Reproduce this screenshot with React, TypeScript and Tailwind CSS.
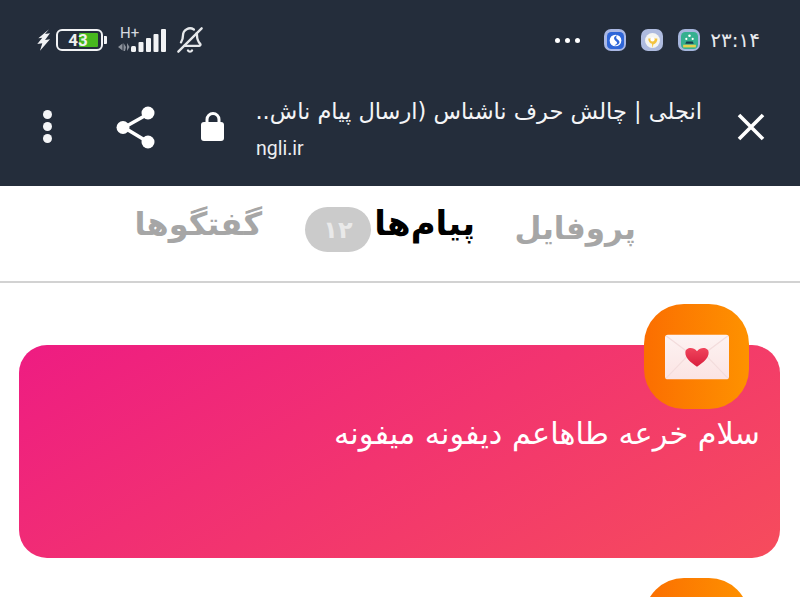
import { BellOff } from "lucide-react";

const fa = "font-['DejaVu_Sans',sans-serif]";

function Battery() {
  return (
    <div className="flex items-center">
      <div className="relative flex h-[22px] w-[47px] items-center justify-center overflow-hidden rounded-[6px] border-2 border-[#f2f3f5]">
        <div className="absolute top-[2px] bottom-[2px] left-[21px] w-[19px] rounded-[1px] bg-[#48b81e]" />
        <span className="relative mr-[3px] font-['Roboto',sans-serif] text-[17px] leading-none font-bold text-[#eef0ee]">43</span>
      </div>
      <div className="ml-[1px] h-[8px] w-[3px] rounded-r-[1px] bg-[#f2f3f5]" />
    </div>
  );
}

function Signal() {
  return (
    <div className="relative h-[26px] w-[50px]">
      <span className="absolute top-[-1px] left-[2px] font-['Roboto',sans-serif] text-[15px] leading-none text-[#d7dae0]">H+</span>
      <svg className="absolute top-0 left-0" width="50" height="26" viewBox="0 0 50 26">
        <path d="M0 20l4.500-3.500v7zM5.500 16v8h1.500l1-4zM9 16v8l2.500-4z" fill="#8b919b" />
        <rect x="13" y="19" width="5" height="6" rx="1.500" fill="#f2f3f5" />
        <rect x="20.500" y="15" width="5" height="10" rx="1" fill="#f2f3f5" />
        <rect x="28" y="11" width="5" height="14" rx="1" fill="#f2f3f5" />
        <rect x="35.500" y="7" width="5" height="18" rx="1" fill="#f2f3f5" />
        <rect x="43" y="2" width="5" height="23" rx="1" fill="#f2f3f5" />
      </svg>
    </div>
  );
}

function AppIcon({ bg, children }: { bg: string; children: React.ReactNode }) {
  return (
    <div className={`flex h-[22px] w-[22px] items-center justify-center rounded-[7px] ${bg}`}>
      {children}
    </div>
  );
}

function StatusBar() {
  return (
    <div className="flex h-[80px] items-center justify-between pr-[40px] pl-[37px]">
      <div className="flex items-center">
        <svg width="13" height="22" viewBox="0 0 13 22">
          <path d="M12 .3L1.300 9.300l4-.6-5 6.300 5-.7L3 21.700l10-11.400-5 .7 5-6.700L8 5z" fill="#f2f3f5" />
        </svg>
        <div className="ml-[6px]"><Battery /></div>
        <div className="ml-[11px]"><Signal /></div>
        <BellOff className="ml-[8px] -scale-x-100 text-[#e6e8eb]" size={28} strokeWidth={2} />
      </div>
      <div className="flex items-center">
        <div className="flex gap-[5px]">
          <div className="h-[5px] w-[5px] rounded-full bg-white" />
          <div className="h-[5px] w-[5px] rounded-full bg-white" />
          <div className="h-[5px] w-[5px] rounded-full bg-white" />
        </div>
        <div className="ml-[24px]">
          <AppIcon bg="bg-[#a9b7e4]">
            <svg width="17" height="17" viewBox="0 0 16 16">
              <rect width="16" height="16" rx="4" fill="#2f66d8" />
              <circle cx="8" cy="8" r="5.500" fill="#fff" />
              <path d="M10 3C7.500 3.500 6 5 7 7c.7 1.400 2.500 1.800 2.500 3.200 0 1-1.200 1.900-2.700 2.300 2.500.6 5-1 5-3 0-2.200-2.900-2.500-3.100-4.200-.1-.9.400-1.700 1.300-2.300z" fill="#2f66d8" />
            </svg>
          </AppIcon>
        </div>
        <div className="ml-[15px]">
          <AppIcon bg="bg-[#aebbdf]">
            <svg width="17" height="17" viewBox="0 0 16 16">
              <circle cx="8" cy="8" r="7" fill="#f4f5f2" />
              <path d="M4 6h8.500c.3 3-1.600 5-3.600 5.500L8 15 7.500 11C5.500 10.500 4 8.500 4 6z" fill="#f3c33f" />
              <circle cx="8" cy="7" r="2" fill="#fff" />
            </svg>
          </AppIcon>
        </div>
        <div className="ml-[15px]">
          <AppIcon bg="bg-[#a5b5dc]">
            <svg width="17" height="17" viewBox="0 0 16 16">
              <rect width="16" height="16" rx="4" fill="#35b08f" />
              <circle cx="8" cy="3.500" r="1.200" fill="#fff" />
              <circle cx="5" cy="6.500" r="1" fill="#fff" />
              <circle cx="11" cy="6.500" r="1" fill="#fff" />
              <path d="M5 9h6l1 2H4z" fill="#173d4d" />
              <path d="M2 12h12v2.500H2z" fill="#e6cf4e" />
            </svg>
          </AppIcon>
        </div>
        <span className={`ml-[10px] ${fa} text-[20px] leading-none text-[#e8eaee]`}>۲۳:۱۴</span>
      </div>
    </div>
  );
}

function Toolbar() {
  return (
    <div className="flex h-[106px] items-start">
      <div className="mt-[30px] ml-[43px] flex w-[9px] flex-col gap-[3px]">
        <div className="h-[9px] w-[9px] rounded-full bg-[#f4f5f7]" />
        <div className="h-[9px] w-[9px] rounded-full bg-[#f4f5f7]" />
        <div className="h-[9px] w-[9px] rounded-full bg-[#f4f5f7]" />
      </div>
      <svg className="mt-[26px] ml-[64px]" width="40" height="44" viewBox="0 0 40 44">
        <path d="M32 8L8 21.500 32 36" fill="none" stroke="#fff" strokeWidth="3.500" />
        <circle cx="32" cy="7" r="6.500" fill="#fff" />
        <circle cx="7" cy="21.500" r="6.500" fill="#fff" />
        <circle cx="32" cy="36" r="6.500" fill="#fff" />
      </svg>
      <svg className="mt-[32px] ml-[45px]" width="24" height="29" viewBox="0 0 24 29">
        <path d="M6 12V7.500a6 6 0 0 1 12 0V12" fill="none" stroke="#fff" strokeWidth="3" />
        <rect y="10" width="23" height="19" rx="3" fill="#fff" />
      </svg>
      <div className="mt-[15px] ml-[31px] w-[446px]">
        <div dir="rtl" className={`${fa} text-[22.5px] leading-[32px] whitespace-nowrap text-[#f4f5f7]`}>
          انجلی | چالش حرف ناشناس (ارسال پیام ناش..
        </div>
        <div className="mt-[10px] font-['Roboto',sans-serif] text-[19.500px] leading-[24px] text-[#eceef1]">ngli.ir</div>
      </div>
      <svg className="mt-[32px] ml-[34px]" width="30" height="30" viewBox="0 0 30 30">
        <path d="M3 3l24 24M27 3L3 27" stroke="#fff" strokeWidth="3.600" />
      </svg>
    </div>
  );
}

function Tabs() {
  return (
    <div className={`flex h-[97px] items-start border-b-2 border-[#d2d2d2] ${fa} font-bold`}>
      <span className="mt-[13px] ml-[137px] w-[125px] text-[32px] leading-[50px] whitespace-nowrap text-[#a6a6a6]" dir="rtl">گفتگوها</span>
      <div className="mt-[21px] ml-[43px] flex h-[45px] w-[66px] items-center justify-center rounded-full bg-[#cbcbcb] text-[24px] leading-none text-[#e9e9e9]">۱۲</div>
      <span className="mt-[12px] ml-[4px] w-[100px] text-[34px] leading-[50px] whitespace-nowrap text-black" dir="rtl">پیام‌ها</span>
      <span className="mt-[17px] ml-[41px] w-[120px] text-[31px] leading-[50px] whitespace-nowrap text-[#a6a6a6]" dir="rtl">پروفایل</span>
    </div>
  );
}

function Envelope() {
  return (
    <svg width="64" height="46" viewBox="0 0 66 46">
      <defs>
        <linearGradient id="env" x1="0" y1="0" x2="0" y2="1">
          <stop offset="0" stopColor="#fdf3f2" />
          <stop offset="1" stopColor="#fbe4e4" />
        </linearGradient>
        <linearGradient id="heart" x1="0" y1="0" x2="0" y2="1">
          <stop offset="0" stopColor="#f0445c" />
          <stop offset="1" stopColor="#d91f3e" />
        </linearGradient>
      </defs>
      <rect width="66" height="46" rx="3" fill="url(#env)" />
      <path d="M1 1l32 24L65 1M1 45l24-25M65 45L41 20" fill="none" stroke="#f3dcdc" strokeWidth="1.200" />
      <path d="M33 33C26 28 21 24 21 18.500c0-5.500 8-6.500 12-1.500 4-5 12-4 12 1.500C45 24 40 28 33 33z" fill="url(#heart)" />
    </svg>
  );
}

function Message({ text }: { text?: string }) {
  return (
    <div className="relative mb-[61px] h-[213px] rounded-[28px] bg-[linear-gradient(150deg,#ee1c82_0%,#f64c5c_100%)]">
      <div className="absolute top-[-41px] right-[31px] flex h-[105px] w-[105px] items-center justify-center rounded-[40px] bg-[linear-gradient(90deg,#fb6e01,#fe9200)]">
        <Envelope />
      </div>
      {text && (
        <div dir="rtl" className={`pt-[68px] pr-[20px] pl-[10px] ${fa} text-[30.300px] leading-[42px] whitespace-nowrap text-white`}>{text}</div>
      )}
    </div>
  );
}

export default function App() {
  return (
    <div className="h-[597px] w-[800px] overflow-hidden bg-white">
      <div className="bg-[#242d3b]">
        <StatusBar />
        <Toolbar />
      </div>
      <Tabs />
      <div className="pt-[62px] pr-[20px] pl-[19px]">
        <Message text="سلام خرعه طاهاعم دیفونه میفونه" />
        <Message />
      </div>
    </div>
  );
}
